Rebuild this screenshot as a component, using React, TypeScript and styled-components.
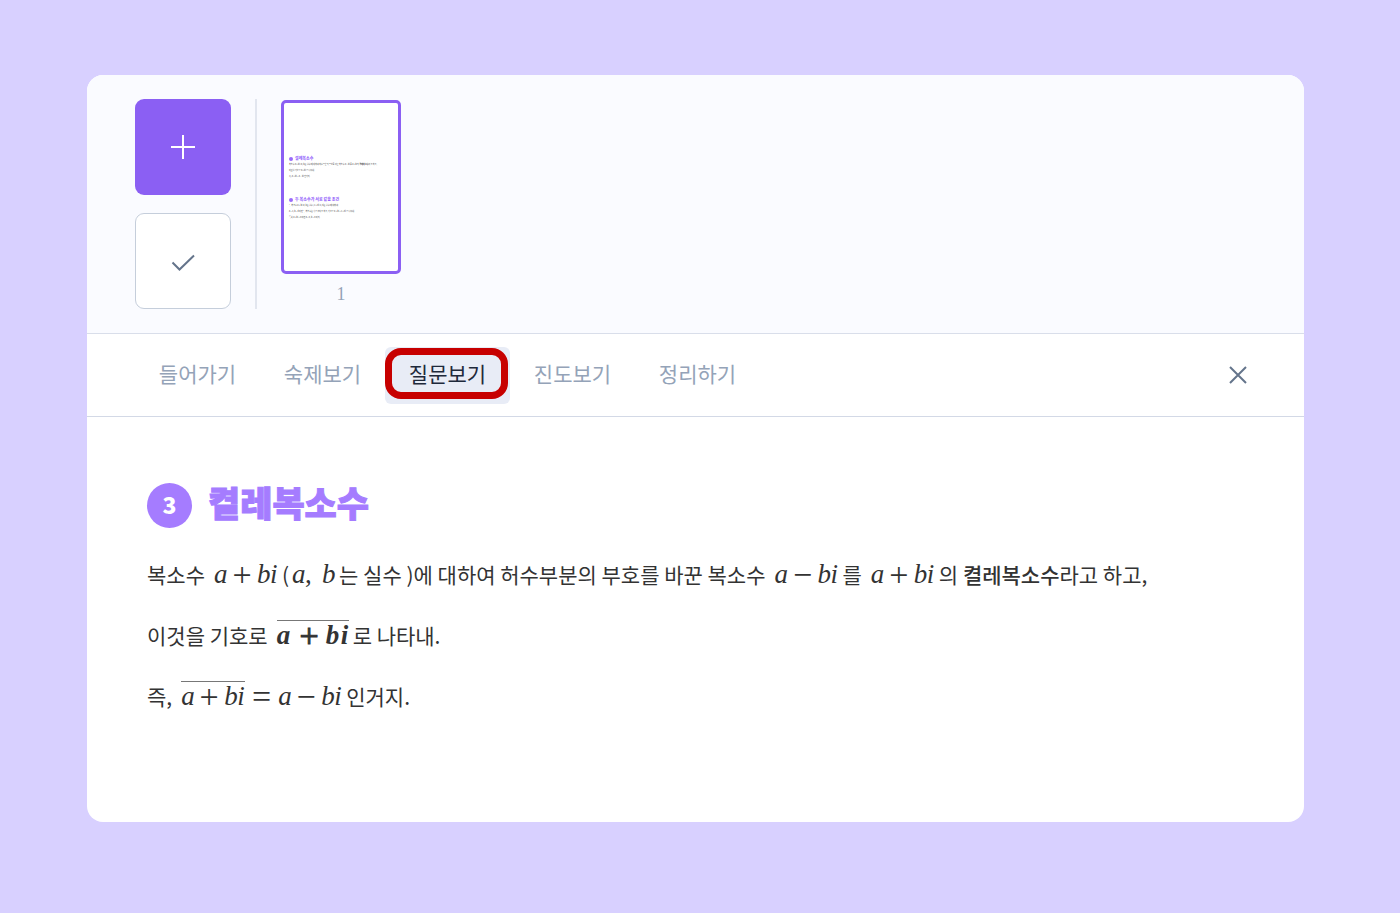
import React from "react";
import styled, { createGlobalStyle, css } from "styled-components";

const GlobalStyle = createGlobalStyle`
  *, *::before, *::after { box-sizing: border-box; }
  body {
    margin: 0;
    background: #d8d0ff;
    font-family: "Noto Sans CJK KR", "Noto Sans", sans-serif;
    color: #333;
  }
  button { font: inherit; padding: 0; cursor: pointer; }
`;

const Page = styled.div`
  display: flex;
  min-height: 100vh;
  padding: 75px 96px 91px 87px;
`;

const Card = styled.main`
  display: flex;
  flex-direction: column;
  flex: 1;
  min-width: 0;
  overflow: hidden;
  border-radius: 16px;
  background: #fff;
`;

const PageStrip = styled.header`
  display: flex;
  align-items: stretch;
  padding: 24px 48px;
  background: #fafbff;
  border-bottom: 1px solid #d9deea;
`;

const Actions = styled.div`
  display: flex;
  flex-direction: column;
  gap: 18px;
  padding-right: 24px;
  border-right: 2px solid #e2e6ef;
`;

const ActionButton = styled.button<{ $primary?: boolean }>`
  display: flex;
  align-items: center;
  justify-content: center;
  width: 96px;
  height: 96px;
  border-radius: 9px;
  border: ${(p) => (p.$primary ? "0" : "1px solid #c5cedb")};
  background: ${(p) => (p.$primary ? "#8b5ff3" : "#fff")};
  color: ${(p) => (p.$primary ? "#fff" : "#64748b")};
`;

const PageItem = styled.figure`
  display: flex;
  flex-direction: column;
  align-items: center;
  gap: 9px;
  margin: 0;
  padding: 1px 0 0 24px;
`;

const Sheet = styled.div`
  display: flex;
  flex-direction: column;
  gap: 16px;
  width: 120px;
  height: 174px;
  padding: 52px 5px 0;
  border: 3px solid #8b5ff3;
  border-radius: 5px;
  background: #fff;
`;

const SheetTitle = styled.div`
  display: flex;
  align-items: center;
  gap: 2px;
  height: 7px;
  font-size: 4px;
  line-height: 7px;
  font-weight: 900;
  color: #9a6cfb;
  white-space: nowrap;
`;

const SheetDot = styled.span`
  width: 4px;
  height: 4px;
  border-radius: 50%;
  background: #9a6cfb;
`;

const SheetLine = styled.div`
  height: 6px;
  font-size: 2px;
  line-height: 6px;
  white-space: nowrap;
`;

const PageNumber = styled.figcaption`
  font-family: "Liberation Serif", serif;
  font-size: 18px;
  line-height: 22px;
  color: #94a3b8;
`;

const TabBar = styled.nav`
  display: flex;
  align-items: center;
  justify-content: space-between;
  height: 83px;
  padding: 0 48px;
  border-bottom: 1px solid #d3d9e6;
`;

const Tabs = styled.div`
  display: flex;
`;

const Tab = styled.button<{ $active?: boolean }>`
  position: relative;
  width: 125px;
  height: 57px;
  padding-bottom: 4px;
  border: 0;
  border-radius: 6px;
  font-size: 21px;
  line-height: 30px;
  background: ${(p) => (p.$active ? "#e8ecf6" : "transparent")};
  color: ${(p) => (p.$active ? "#1e293b" : "#94a3b8")};
  ${(p) =>
    p.$active &&
    css`
      &::after {
        content: "";
        position: absolute;
        inset: 1px 2px 5px 0;
        border: 7px solid #c70000;
        border-radius: 16px;
      }
    `}
`;

const CloseButton = styled.button`
  display: flex;
  align-items: center;
  justify-content: center;
  width: 36px;
  height: 36px;
  border: 0;
  background: transparent;
  color: #64748b;
`;

const Lesson = styled.article`
  padding: 66px 60px;
`;

const LessonTitle = styled.h1`
  display: flex;
  align-items: center;
  gap: 16px;
  margin: 0 0 16px;
  height: 45px;
  font-size: 35px;
  line-height: 45px;
  font-weight: 900;
  color: #a57cff;
`;

const TitleText = styled.span`
  padding-bottom: 8px;
  -webkit-text-stroke: 1px #a57cff;
`;

const Badge = styled.span`
  display: flex;
  align-items: center;
  justify-content: center;
  width: 45px;
  height: 45px;
  padding-bottom: 2px;
  border-radius: 50%;
  background: #a57cff;
  color: #fff;
  font-size: 23px;
`;

const Line = styled.p`
  margin: 0;
  min-height: 61px;
  font-size: 21px;
  line-height: 61px;
`;

const Term = styled.strong`
  font-weight: 500;
`;

const Formula = styled.span<{ $bold?: boolean; $tight?: boolean }>`
  display: inline-block;
  margin: 0 4px 0 ${(p) => (p.$tight ? 3 : 9)}px;
  font-family: "Liberation Serif", serif;
  font-size: 27px;
  line-height: 28px;
  font-weight: ${(p) => (p.$bold ? 700 : 400)};
`;

const Conjugate = styled.span`
  display: inline-block;
  border-top: 1px solid #777;
`;

const Letter = styled.i<{ $w: number }>`
  display: inline-block;
  width: ${(p) => p.$w}px;
`;

const Comma = styled.span`
  display: inline-block;
  width: 17px;
`;

const Operator = styled.span<{ $wide?: boolean; $bold?: boolean }>`
  display: inline-block;
  width: ${(p) => (p.$wide ? 33 : 30)}px;
  text-align: center;
  font-size: 34px;
  font-weight: 400;
  line-height: 0;
  vertical-align: -3px;
  -webkit-text-stroke: ${(p) => (p.$bold ? "1px currentColor" : "0")};
`;

const Expr = ({ op, bold }: { op: string; bold?: boolean }) => (
  <>
    <Letter $w={bold ? 16 : 13}>a</Letter>
    <Operator $wide={bold} $bold={bold}>{op}</Operator>
    <Letter $w={bold ? 15 : 13}>b</Letter>
    <Letter $w={8}>i</Letter>
  </>
);

const tabs = ["들어가기", "숙제보기", "질문보기", "진도보기", "정리하기"];

export default function App() {
  return (
    <>
      <GlobalStyle />
      <Page>
        <Card>
          <PageStrip>
            <Actions>
              <ActionButton $primary aria-label="추가">
                <svg width="26" height="26" fill="none" stroke="currentColor" strokeWidth="2">
                  <path d="M13 1v24M1 13h24" />
                </svg>
              </ActionButton>
              <ActionButton aria-label="확인">
                <svg width="26" height="26" fill="none" stroke="currentColor" strokeWidth="2">
                  <path d="M2.500 14.500l7 7L24 7.500" />
                </svg>
              </ActionButton>
            </Actions>
            <PageItem>
              <Sheet>
                <section>
                  <SheetTitle><SheetDot />켤레복소수</SheetTitle>
                  <SheetLine>복소수 a + bi (a, b는 실수)에 대하여 허수부분의 부호를 바꾼 복소수 a − bi를 a + bi의 <b>켤레복소수</b>라고 하고,</SheetLine>
                  <SheetLine>이것을 기호로 a + bi 로 나타내.</SheetLine>
                  <SheetLine>즉, a + bi = a − bi 인거지.</SheetLine>
                </section>
                <section>
                  <SheetTitle><SheetDot />두 복소수가 서로 같을 조건</SheetTitle>
                  <SheetLine>두 복소수 a + bi (a, b는 실수), c + di (c, d는 실수)에 대하여</SheetLine>
                  <SheetLine>a = c, b = d 이면 두 복소수는 서로 같다고 하고, 기호로 a + bi = c + di 로 나타내.</SheetLine>
                  <SheetLine>특히 a + bi = 0 이면 a = 0, b = 0 이지.</SheetLine>
                </section>
              </Sheet>
              <PageNumber>1</PageNumber>
            </PageItem>
          </PageStrip>
          <TabBar>
            <Tabs>
              {tabs.map((label) => (
                <Tab key={label} $active={label === "질문보기"}>{label}</Tab>
              ))}
            </Tabs>
            <CloseButton aria-label="닫기">
              <svg width="20" height="20" fill="none" stroke="currentColor" strokeWidth="2">
                <path d="M2 2l16 16M18 2L2 18" />
              </svg>
            </CloseButton>
          </TabBar>
          <Lesson>
            <LessonTitle>
              <Badge>3</Badge>
              <TitleText>켤레복소수</TitleText>
            </LessonTitle>
            <Line>
              복소수<Formula><Expr op="+" /></Formula>(<Formula $tight><Letter $w={13}>a</Letter><Comma>,</Comma><Letter $w={13}>b</Letter></Formula>는 실수 )에 대하여 허수부분의 부호를 바꾼 복소수
              <Formula><Expr op="−" /></Formula>를<Formula><Expr op="+" /></Formula>의 <Term>켤레복소수</Term>라고 하고,
            </Line>
            <Line>
              이것을 기호로<Formula $bold><Conjugate><Expr op="+" bold /></Conjugate></Formula>로 나타내.
            </Line>
            <Line>
              즉,<Formula><Conjugate><Expr op="+" /></Conjugate><Operator $wide>=</Operator><Expr op="−" /></Formula>인거지.
            </Line>
          </Lesson>
        </Card>
      </Page>
    </>
  );
}
